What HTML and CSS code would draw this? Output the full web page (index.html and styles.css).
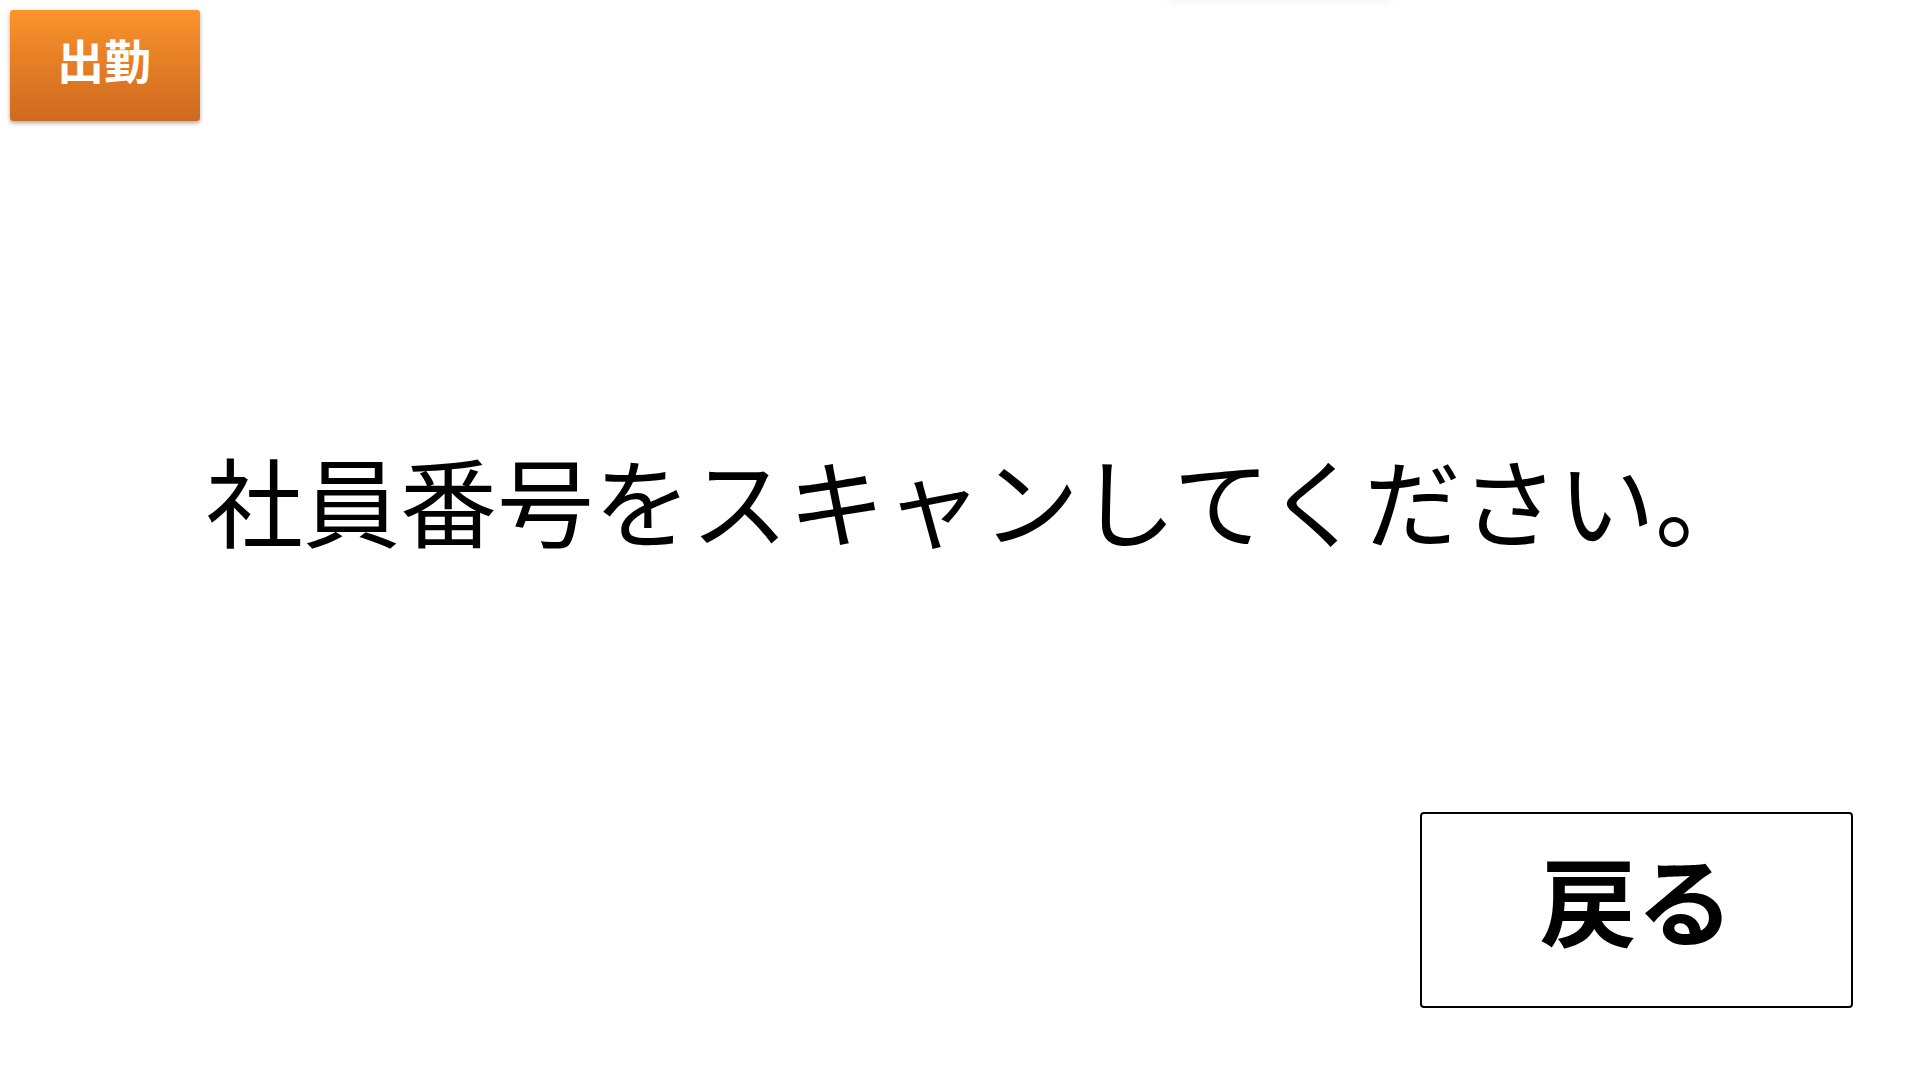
FILE: index.html
```html
<!DOCTYPE html>
<html lang="ja">
<head>
<meta charset="utf-8">
<title>出勤</title>
<link rel="stylesheet" href="styles.css">
</head>
<body>
<div class="page">
  <div class="toast-hidden"></div>
  <header class="header">
    <div class="mode-badge">出勤</div>
  </header>
  <main class="message-area">
    <p class="message">社員番号をスキャンしてください。</p>
  </main>
  <footer class="footer">
    <button class="back-button" type="button">戻る</button>
  </footer>
</div>
</body>
</html>
```

FILE: styles.css
```css
html, body {
  margin: 0;
  padding: 0;
  background: #ffffff;
}

body {
  font-family: "Noto Sans CJK JP", "Noto Sans", sans-serif;
  color: #000000;
}

.page {
  position: relative;
  width: 1920px;
  height: 1080px;
  display: flex;
  flex-direction: column;
  overflow: hidden;
}

.toast-hidden {
  position: absolute;
  top: -100px;
  left: 1170px;
  width: 220px;
  height: 100px;
  background: #ffffff;
  box-shadow: 0 0 10px rgba(0, 0, 0, 0.07);
}

.header {
  padding: 10px 0 0 10px;
  display: flex;
}

.mode-badge {
  width: 190px;
  height: 111px;
  box-sizing: border-box;
  border-radius: 3px;
  background: linear-gradient(to bottom, #ff942a 0%, #f18a28 20%, #dc7523 70%, #cf6b1f 100%);
  box-shadow: 0 2px 4px rgba(0, 0, 0, 0.35);
  color: #ffffff;
  font-size: 47px;
  font-weight: 700;
  display: flex;
  align-items: center;
  justify-content: center;
  padding: 0 2px 14px 0;
}

.message-area {
  flex: 1;
  display: flex;
  justify-content: center;
  align-items: flex-start;
  padding-top: 319px;
  padding-left: 38px;
}

.message {
  margin: 0;
  font-size: 97px;
  line-height: 1.2;
  font-weight: 400;
  white-space: nowrap;
}

.footer {
  display: flex;
  justify-content: flex-end;
  padding: 0 67px 72px 0;
}

.back-button {
  width: 433px;
  height: 196px;
  box-sizing: border-box;
  border: 2px solid #000000;
  border-radius: 4px;
  background: #ffffff;
  font-family: "Noto Sans CJK JP", "Noto Sans", sans-serif;
  font-size: 97px;
  font-weight: 700;
  color: #000000;
  padding: 0 0 28px 0;
  line-height: 1;
}
```
